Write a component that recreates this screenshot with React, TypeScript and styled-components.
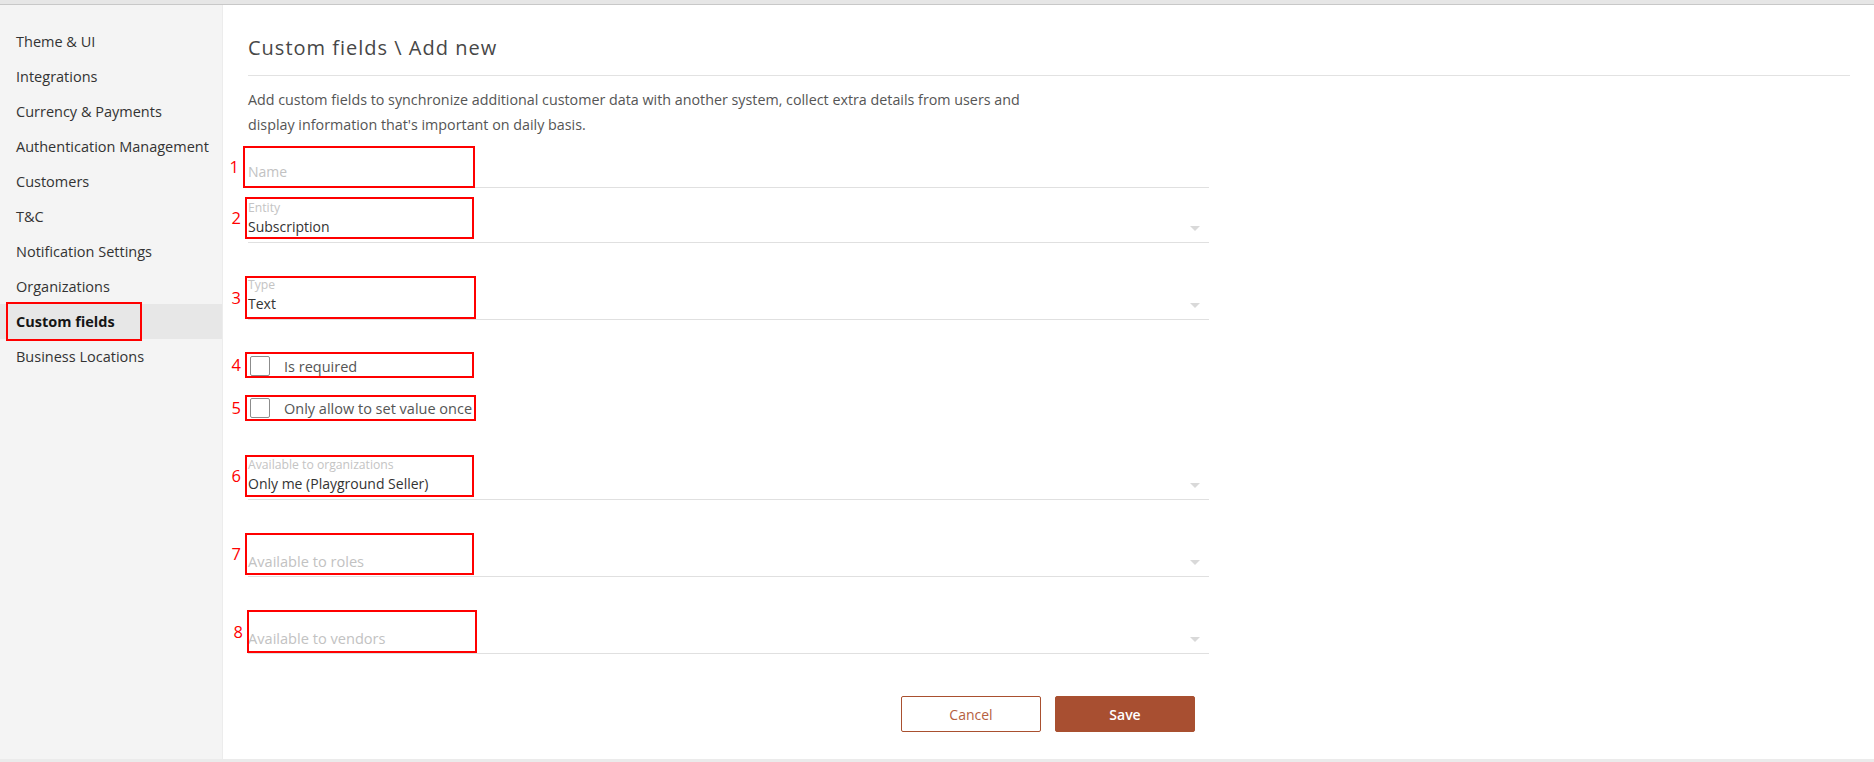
import React from "react";
import styled, { createGlobalStyle } from "styled-components";

const GlobalStyle = createGlobalStyle`
  html, body { margin: 0; padding: 0; }
  body {
    font-family: "Open Sans", "Noto Sans", sans-serif;
    background: #ebebeb;
  }
  * { box-sizing: border-box; }
`;

const Shell = styled.div`
  width: 1874px;
  height: 762px;
  display: flex;
  flex-direction: column;
  overflow: hidden;
`;

const TopStrip = styled.div`
  flex: none;
  height: 5px;
  background: #e6e6e6;
  border-bottom: 1px solid #c8c8c8;
`;

const BottomStrip = styled.div`
  flex: none;
  height: 3px;
  background: #ebebeb;
`;

const Body = styled.div`
  flex: 1;
  min-height: 0;
  display: flex;
`;

const Sidebar = styled.nav`
  flex: none;
  width: 223px;
  background: #f4f4f4;
  border-right: 1px solid #ececec;
  padding-top: 19px;
  display: flex;
  flex-direction: column;
`;

const NavItem = styled.div<{ $active?: boolean }>`
  position: relative;
  height: 35px;
  display: flex;
  align-items: center;
  padding-left: 16px;
  font-size: 14.5px;
  color: ${(p) => (p.$active ? "#151515" : "#333")};
  font-weight: ${(p) => (p.$active ? 700 : 400)};
  background: ${(p) => (p.$active ? "#e7e7e7" : "transparent")};
  white-space: nowrap;
`;

const Main = styled.main`
  flex: 1;
  background: #fff;
  padding: 29px 24px 0 25px;
  display: flex;
  flex-direction: column;
`;

const Heading = styled.h1`
  margin: 0;
  font-size: 20px;
  font-weight: 400;
  letter-spacing: 1px;
  line-height: 28px;
  color: #474747;
`;

const Divider = styled.div`
  height: 1px;
  background: #e2e2e2;
  margin-top: 13px;
`;

const Description = styled.p`
  margin: 10.5px 0 0;
  max-width: 810px;
  font-size: 14.3px;
  line-height: 25px;
  color: #555;
`;

const Form = styled.form`
  width: 961px;
  margin-top: 9.5px;
  display: flex;
  flex-direction: column;
`;

const Field = styled.div<{ $h: number; $mt?: number }>`
  position: relative;
  height: ${(p) => p.$h}px;
  margin-top: ${(p) => p.$mt ?? 0}px;
  border-bottom: 1px solid #e0e0e0;
  padding-bottom: 5px;
  display: flex;
  flex-direction: column;
  justify-content: flex-end;
`;

const FieldLabel = styled.div`
  font-size: 12.2px;
  line-height: 15px;
  color: #c4c4c4;
  margin-bottom: 2px;
`;

const FieldValue = styled.div<{ $placeholder?: boolean; $size?: number }>`
  font-size: ${(p) => p.$size ?? 14}px;
  line-height: 20px;
  color: ${(p) => (p.$placeholder ? "#c2c2c2" : "#333")};
  white-space: nowrap;
`;

const Caret = styled.span`
  position: absolute;
  right: 9px;
  bottom: 11px;
  width: 0;
  height: 0;
  border-left: 5px solid transparent;
  border-right: 5px solid transparent;
  border-top: 5px solid #d9d9d9;
`;

const CheckRow = styled.label<{ $mt: number }>`
  position: relative;
  display: flex;
  align-items: center;
  gap: 14px;
  height: 20px;
  margin-top: ${(p) => p.$mt}px;
  padding-left: 2px;
`;

const CheckBox = styled.span`
  width: 20px;
  height: 20px;
  border: 1px solid #8c8c8c;
  border-radius: 2px;
  background: #fff;
`;

const CheckText = styled.span`
  font-size: 14.5px;
  color: #555;
`;

/* numbered red call-out frame drawn over a control */
const Callout = styled.span<{ $l: number; $t: number; $w: number; $h: number }>`
  position: absolute;
  left: ${(p) => p.$l}px;
  top: ${(p) => p.$t}px;
  width: ${(p) => p.$w}px;
  height: ${(p) => p.$h}px;
  border: 2px solid #ff0000;
  pointer-events: none;
`;

const CalloutNumber = styled.span`
  position: absolute;
  right: calc(100% + 6px);
  top: 50%;
  transform: translateY(-50%);
  font-size: 16.5px;
  line-height: 20px;
  color: #ff0000;
`;

const ButtonRow = styled.div`
  display: flex;
  justify-content: flex-end;
  gap: 14px;
  padding-right: 14px;
  margin-top: 42px;
`;

const Button = styled.button<{ $primary?: boolean }>`
  width: 140px;
  height: 36px;
  border-radius: 2px;
  font-family: inherit;
  font-size: 14px;
  font-weight: ${(p) => (p.$primary ? 600 : 400)};
  border: 1px solid #a9502f;
  background: ${(p) => (p.$primary ? "#a84f31" : "#fff")};
  color: ${(p) => (p.$primary ? "#fff" : "#b5603f")};
  cursor: pointer;
`;

const navItems = [
  "Theme & UI",
  "Integrations",
  "Currency & Payments",
  "Authentication Management",
  "Customers",
  "T&C",
  "Notification Settings",
  "Organizations",
  "Custom fields",
  "Business Locations",
];

type Box = { l: number; t: number; w: number; h: number; n: number };

const Mark = ({ l, t, w, h, n }: Box) => (
  <Callout $l={l} $t={t} $w={w} $h={h}>
    <CalloutNumber>{n}</CalloutNumber>
  </Callout>
);

export default function App() {
  return (
    <>
      <GlobalStyle />
      <Shell>
        <TopStrip />
        <Body>
          <Sidebar>
            {navItems.map((item) => (
              <NavItem key={item} $active={item === "Custom fields"}>
                {item}
                {item === "Custom fields" && (
                  <Callout $l={6} $t={-2} $w={136} $h={39} />
                )}
              </NavItem>
            ))}
          </Sidebar>
          <Main>
            <Heading>Custom fields \ Add new</Heading>
            <Divider />
            <Description>
              Add custom fields to synchronize additional customer data with another system, collect
              extra details from users and display information that's important on daily basis.
            </Description>
            <Form onSubmit={(e) => e.preventDefault()}>
              <Field $h={42}>
                <FieldValue $placeholder>Name</FieldValue>
                <Mark n={1} l={-5} t={0} w={232} h={42} />
              </Field>
              <Field $h={55}>
                <FieldLabel>Entity</FieldLabel>
                <FieldValue>Subscription</FieldValue>
                <Caret />
                <Mark n={2} l={-3} t={9} w={229} h={42} />
              </Field>
              <Field $h={77}>
                <FieldLabel>Type</FieldLabel>
                <FieldValue>Text</FieldValue>
                <Caret />
                <Mark n={3} l={-3} t={33} w={231} h={43} />
              </Field>
              <CheckRow $mt={36}>
                <CheckBox />
                <CheckText>Is required</CheckText>
                <Mark n={4} l={-3} t={-4} w={229} h={26} />
              </CheckRow>
              <CheckRow $mt={22}>
                <CheckBox />
                <CheckText>Only allow to set value once</CheckText>
                <Mark n={5} l={-3} t={-3} w={231} h={26} />
              </CheckRow>
              <Field $h={77} $mt={5}>
                <FieldLabel>Available to organizations</FieldLabel>
                <FieldValue>Only me (Playground Seller)</FieldValue>
                <Caret />
                <Mark n={6} l={-3} t={32} w={229} h={42} />
              </Field>
              <Field $h={77}>
                <FieldValue $placeholder $size={14.6}>Available to roles</FieldValue>
                <Caret />
                <Mark n={7} l={-3} t={33} w={229} h={42} />
              </Field>
              <Field $h={77}>
                <FieldValue $placeholder $size={14.6}>Available to vendors</FieldValue>
                <Caret />
                <Mark n={8} l={-1} t={33} w={230} h={43} />
              </Field>
              <ButtonRow>
                <Button type="button">Cancel</Button>
                <Button type="submit" $primary>Save</Button>
              </ButtonRow>
            </Form>
          </Main>
        </Body>
        <BottomStrip />
      </Shell>
    </>
  );
}
